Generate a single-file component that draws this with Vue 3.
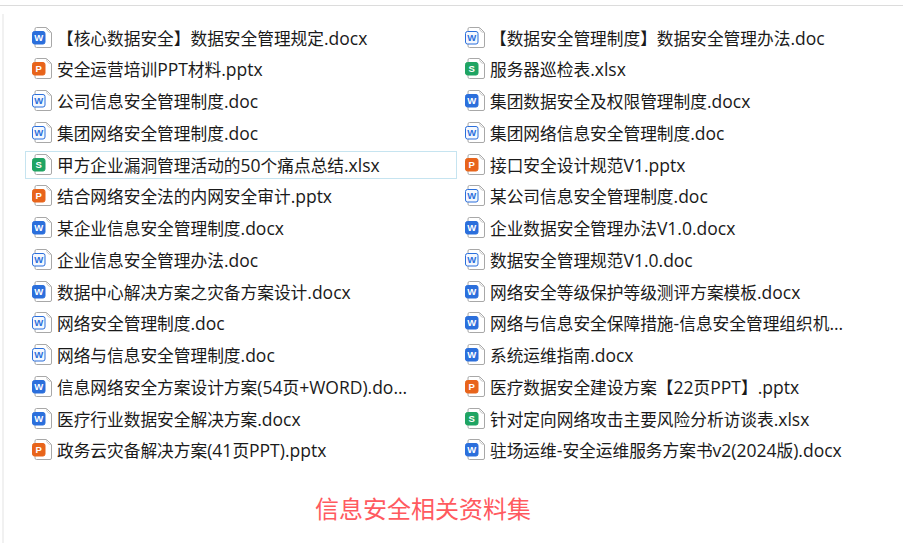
<script setup>
const files = [
  ['w', '【核心数据安全】数据安全管理规定.docx'],
  ['d', '【数据安全管理制度】数据安全管理办法.doc'],
  ['p', '安全运营培训PPT材料.pptx'],
  ['s', '服务器巡检表.xlsx'],
  ['d', '公司信息安全管理制度.doc'],
  ['w', '集团数据安全及权限管理制度.docx'],
  ['d', '集团网络安全管理制度.doc'],
  ['d', '集团网络信息安全管理制度.doc'],
  ['s', '甲方企业漏洞管理活动的50个痛点总结.xlsx', true],
  ['p', '接口安全设计规范V1.pptx'],
  ['p', '结合网络安全法的内网安全审计.pptx'],
  ['d', '某公司信息安全管理制度.doc'],
  ['w', '某企业信息安全管理制度.docx'],
  ['w', '企业数据安全管理办法V1.0.docx'],
  ['d', '企业信息安全管理办法.doc'],
  ['d', '数据安全管理规范V1.0.doc'],
  ['w', '数据中心解决方案之灾备方案设计.docx'],
  ['w', '网络安全等级保护等级测评方案模板.docx'],
  ['d', '网络安全管理制度.doc'],
  ['w', '网络与信息安全保障措施-信息安全管理组织机...'],
  ['d', '网络与信息安全管理制度.doc'],
  ['w', '系统运维指南.docx'],
  ['w', '信息网络安全方案设计方案(54页+WORD).do...'],
  ['p', '医疗数据安全建设方案【22页PPT】.pptx'],
  ['w', '医疗行业数据安全解决方案.docx'],
  ['s', '针对定向网络攻击主要风险分析访谈表.xlsx'],
  ['p', '政务云灾备解决方案(41页PPT).pptx'],
  ['w', '驻场运维-安全运维服务方案书v2(2024版).docx'],
]
const badge = {
  w: { fill: '#2b6fdc', text: '#fff', letter: 'W' },
  d: { fill: '#f4f8fe', text: '#2b6fdc', letter: 'W' },
  p: { fill: '#e8641b', text: '#fff', letter: 'P' },
  s: { fill: '#1fa463', text: '#fff', letter: 'S' },
}
// latin runs sit slightly larger than the cjk ones
const runs = (name) => name.match(/[\x20-\x7e]+|[^\x20-\x7e]+/g)
const isLatin = (run) => /^[\x20-\x7e]/.test(run)
</script>

<template>
  <div class="page">
    <div class="sheet">
      <ul class="list">
        <li v-for="f in files" :key="f[1]" class="row" :class="{ selected: f[2] }">
          <svg class="icon" width="20" height="21" viewBox="0 0 20 21">
            <path d="M4.5 0.5H14.5L19.5 5.5V19A1.5 1.5 0 0 1 18 20.5H4.5A1.5 1.5 0 0 1 3 19V2A1.5 1.5 0 0 1 4.5 0.5Z" fill="#fff" stroke="#a8a8a8" />
            <path d="M14.5 0.5C14.5 3.5 16 5.5 19.5 5.5" fill="none" stroke="#c8c8c8" />
            <rect x="0.5" y="4.5" width="12.5" height="12.5" rx="2" :fill="badge[f[0]].fill" :stroke="f[0] === 'd' ? '#2b6fdc' : badge[f[0]].fill" />
            <text x="6.75" y="14.4" text-anchor="middle" class="letter" :fill="badge[f[0]].text">{{ badge[f[0]].letter }}</text>
          </svg>
          <span class="name"><span v-for="(r, i) in runs(f[1])" :key="i" :class="{ latin: isLatin(r) }">{{ r }}</span></span>
        </li>
      </ul>
      <p class="title">信息安全相关资料集</p>
    </div>
  </div>
</template>

<style scoped>
.page {
  width: 903px;
  height: 543px;
  overflow: hidden;
  background: #fff;
  padding-top: 5px;
  box-sizing: border-box;
  font-family: "Open Sans", "Noto Sans CJK SC", sans-serif;
}

.sheet {
  border-top: 1px solid #dcdcdc;
  height: 100%;
  box-sizing: border-box;
  padding-top: 18px;
  padding-left: 25px;
  background: linear-gradient(#fff 8px, transparent 8px) no-repeat, linear-gradient(#f1f1f1, #f1f1f1) 2px 0 / 2px 100% no-repeat;
}

.list {
  list-style: none;
  margin: 0;
  padding: 0;
  display: grid;
  grid-template-columns: 433px 433px;
  grid-auto-rows: 28px;
  row-gap: 3.77px;
}

.row {
  display: flex;
  align-items: center;
  padding-left: 6px;
  width: 432px;
  box-sizing: border-box;
  border: 1px solid transparent;
}

.row.selected {
  border: 1px solid #c6e4f0;
}

.icon {
  flex: none;
  margin-top: -2px;
  margin-right: 5px;
}

.letter {
  font-family: "Liberation Sans", sans-serif;
  font-size: 9.5px;
  font-weight: 700;
}

.name {
  font-size: 16.7px;
  line-height: 24px;
  color: #1a1a1a;
  white-space: nowrap;
}

.latin {
  font-size: 17.5px;
}

.title {
  margin: 27px 0 0;
  width: 796px;
  text-align: center;
  font-size: 24px;
  line-height: 34px;
  color: #ff5a5f;
}
</style>
